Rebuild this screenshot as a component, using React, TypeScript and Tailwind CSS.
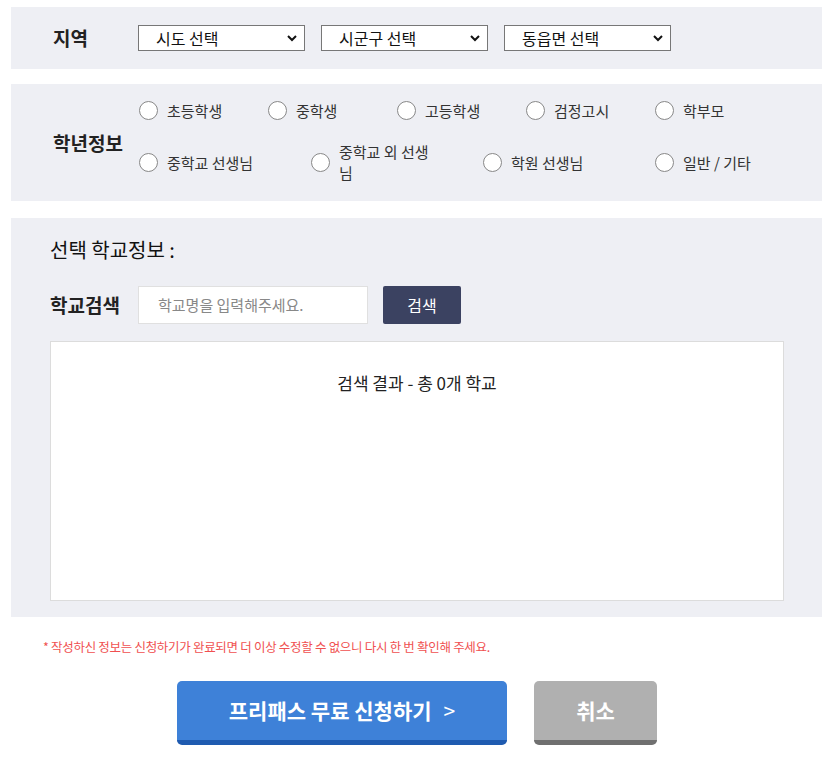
export default function App() {
  const f = { fontFamily: '"Noto Sans CJK KR", "Noto Sans", sans-serif' };
  const Radio = ({ label, w }: { label: string; w: string }) => (
    <label className={`flex items-center gap-[9px] ${w} text-[15px] text-[#333] leading-[21px]`}>
      <span className="w-[19px] h-[19px] shrink-0 rounded-full border border-[#888] bg-white" />
      <span>{label}</span>
    </label>
  );
  const Sel = ({ t }: { t: string }) => (
    <div className="w-[167px] h-[26px] border border-[#777] bg-white flex items-center justify-between pl-[17px] pr-[6px] text-[16px] text-[#111]">
      <span>{t}</span>
      <svg width="12" height="8" viewBox="0 0 12 8"><path d="M2 2l4 4 4-4" stroke="#111" strokeWidth="2" fill="none" /></svg>
    </div>
  );
  return (
    <div style={f} className="w-[836px] h-[759px] bg-white pt-[7px] px-[11px]">
      <div className="w-[811px] h-[62px] bg-[#eeeff4] flex items-center pl-[42px]">
        <div className="w-[85px] text-[19px] font-bold text-[#222]">지역</div>
        <div className="flex gap-[16px]"><Sel t="시도 선택" /><Sel t="시군구 선택" /><Sel t="동읍면 선택" /></div>
      </div>
      <div className="mt-[15px] w-[811px] h-[117px] bg-[#eeeff4] flex items-center pl-[42px]">
        <div className="w-[86px] text-[19px] font-bold text-[#222] mt-[2px]">학년정보</div>
        <div className="flex flex-col gap-[20px] -mt-[2px]">
          <div className="flex">
            <Radio label="초등학생" w="w-[129px]" />
            <Radio label="중학생" w="w-[129px]" />
            <Radio label="고등학생" w="w-[129px]" />
            <Radio label="검정고시" w="w-[129px]" />
            <Radio label="학부모" w="w-[129px]" />
          </div>
          <div className="flex">
            <Radio label="중학교 선생님" w="w-[172px]" />
            <Radio label="중학교 외 선생님" w="w-[172px] pr-[44px]" />
            <Radio label="학원 선생님" w="w-[172px]" />
            <Radio label="일반 / 기타" w="w-[129px]" />
          </div>
        </div>
      </div>
      <div className="mt-[17px] w-[811px] h-[399px] bg-[#eeeff4] pl-[39px] pt-[18px]">
        <div className="text-[20px] text-[#111] leading-[28px]">선택 학교정보 :</div>
        <div className="flex items-center mt-[22px]">
          <div className="w-[88px] text-[19px] font-bold text-[#222]">학교검색</div>
          <div className="w-[230px] h-[38px] bg-white border border-[#e0e0e0] flex items-center pl-[19px] text-[15px] text-[#888]">학교명을 입력해주세요.</div>
          <div className="ml-[15px] w-[78px] h-[38px] bg-[#3b4261] rounded-[2px] text-white text-[16px] flex items-center justify-center">검색</div>
        </div>
        <div className="mt-[17px] w-[734px] h-[260px] bg-white border border-[#dcdcdc] pt-[28px] text-center text-[17px] text-[#222]">검색 결과 - 총 0개 학교</div>
      </div>
      <div className="mt-[21px] pl-[32px] text-[12.5px] tracking-[-0.3px] text-[#f05050]">* 작성하신 정보는 신청하기가 완료되면 더 이상 수정할 수 없으니 다시 한 번 확인해 주세요.</div>
      <div className="flex justify-center gap-[27px] mt-[24px] pr-[2px]">
        <div className="w-[330px] h-[64px] bg-[#3e81d8] border-b-[5px] border-[#1f5bb0] rounded-[5px] text-white text-[21px] font-bold flex items-center justify-center gap-[12px]">
          프리패스 무료 신청하기 <span className="font-normal">&gt;</span>
        </div>
        <div className="w-[123px] h-[64px] bg-[#b0b0b0] border-b-[5px] border-[#707070] rounded-[5px] text-white text-[21px] font-bold flex items-center justify-center">취소</div>
      </div>
    </div>
  );
}
